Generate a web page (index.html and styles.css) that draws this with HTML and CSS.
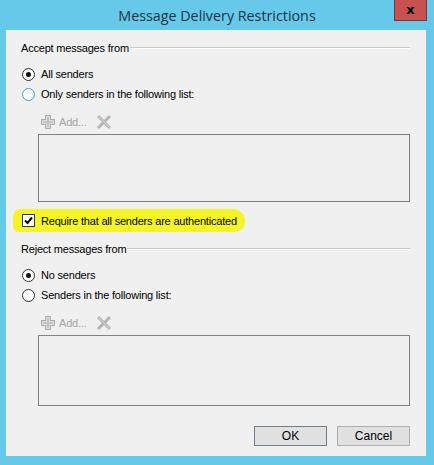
FILE: index.html
```html
<!DOCTYPE html>
<html lang="en">
<head>
    <meta charset="UTF-8">
    <meta name="viewport" content="width=device-width, initial-scale=1.0">
    <title>Message Delivery Restrictions</title>
    <link rel="stylesheet" href="styles.css">
</head>
<body>
    <div class="window">
        <div class="titlebar">
            <span class="title">Message Delivery Restrictions</span>
            <button class="close" type="button">x</button>
        </div>

        <div class="panel">
            <!-- accept group -->
            <div class="legend"><span>Accept messages from</span></div>
            <label class="option first">
                <span class="radio checked"></span>All senders
            </label>
            <label class="option">
                <span class="radio focus"></span>Only senders in the following list:
            </label>
            <div class="toolbar">
                <svg class="plus" width="16" height="16" viewBox="0 0 16 16">
                    <path d="M5.5 1.5h5v4h4v5h-4v4h-5v-4h-4v-5h4z" fill="#c4c4c4" stroke="#a9a9a9"/>
                    <path d="M6.5 2.5h3v4h4v3h-4v4h-3v-4h-4v-3h4z" fill="none" stroke="#dedede"/>
                </svg>
                <span class="add">Add...</span>
                <svg class="remove" width="16" height="16" viewBox="0 0 16 16">
                    <path d="M2 2l12 12M14 2L2 14" stroke="#b4b4b4" stroke-width="3"/>
                    <path d="M2.5 2.5l11 11" stroke="#d4d4d4" stroke-width="1"/>
                </svg>
            </div>
            <div class="listbox"></div>

            <label class="check-row">
                <span class="checkbox">
                    <svg width="9" height="9" viewBox="0 0 9 9">
                        <path d="M1 4.5l2.5 2.5L8 1.5" fill="none" stroke="#000" stroke-width="2"/>
                    </svg>
                </span>Require that all senders are authenticated
            </label>

            <!-- reject group -->
            <div class="legend"><span>Reject messages from</span></div>
            <label class="option first">
                <span class="radio checked"></span>No senders
            </label>
            <label class="option">
                <span class="radio"></span>Senders in the following list:
            </label>
            <div class="toolbar">
                <svg class="plus" width="16" height="16" viewBox="0 0 16 16">
                    <path d="M5.5 1.5h5v4h4v5h-4v4h-5v-4h-4v-5h4z" fill="#c4c4c4" stroke="#a9a9a9"/>
                    <path d="M6.5 2.5h3v4h4v3h-4v4h-3v-4h-4v-3h4z" fill="none" stroke="#dedede"/>
                </svg>
                <span class="add">Add...</span>
                <svg class="remove" width="16" height="16" viewBox="0 0 16 16">
                    <path d="M2 2l12 12M14 2L2 14" stroke="#b4b4b4" stroke-width="3"/>
                    <path d="M2.5 2.5l11 11" stroke="#d4d4d4" stroke-width="1"/>
                </svg>
            </div>
            <div class="listbox tall"></div>

            <div class="buttons">
                <button type="button" class="btn default">OK</button>
                <button type="button" class="btn">Cancel</button>
            </div>
        </div>
    </div>
</body>
</html>
```

FILE: styles.css
```css
html, body {
    margin: 0;
    padding: 0;
    height: 100%;
    background-color: #66c9e9;
    font-family: "Liberation Sans", Arial, sans-serif;
    font-size: 11px;
    letter-spacing: -0.2px;
    color: #000;
}

.window {
    width: 434px;
    height: 465px;
    display: flex;
    flex-direction: column;
}

.titlebar {
    height: 30px;
    position: relative;
    display: flex;
    align-items: center;
    justify-content: center;
}

.title {
    font-family: "Open Sans", sans-serif;
    font-size: 14.3px;
    letter-spacing: 0;
    color: #1b3444;
    margin-top: 1px;
}

.close {
    position: absolute;
    top: 0;
    right: 7px;
    width: 33px;
    height: 21px;
    padding: 0;
    background-color: #c75050;
    border: 1px solid #6b3a3a;
    border-top: none;
    color: #000;
    font-family: "DejaVu Sans", sans-serif;
    font-weight: bold;
    font-size: 13px;
    line-height: 16px;
}

.panel {
    margin: 0 8px 0 6px;
    height: 426px;
    box-sizing: border-box;
    background-color: #f0f0f0;
    padding: 10px 16px 0 15px;
    display: flex;
    flex-direction: column;
}

.legend {
    height: 16px;
    display: flex;
    align-items: center;
}

.legend::after {
    content: "";
    flex: 1;
    height: 1px;
    background-color: #c8c8c8;
    border-bottom: 1px solid #fff;
    margin-left: 1px;
}

.option {
    height: 20px;
    display: flex;
    align-items: center;
    white-space: nowrap;
}

.option.first {
    margin-top: 8px;
}

.radio {
    width: 11px;
    height: 11px;
    border: 1px solid #333;
    border-radius: 50%;
    background-color: #fff;
    margin: 0 6px 0 1px;
    position: relative;
}

.radio.focus {
    border-color: #3c9fd4;
}

.radio.checked::after {
    content: "";
    position: absolute;
    left: 3px;
    top: 3px;
    width: 5px;
    height: 5px;
    border-radius: 50%;
    background-color: #111;
}

.toolbar {
    height: 18px;
    margin: 9px 0 3px 19px;
    display: flex;
    align-items: center;
}

.add {
    color: #a3a3a3;
    margin-left: 3px;
}

.remove {
    margin-left: 9px;
}

.listbox {
    margin-left: 17px;
    height: 66px;
    border: 1px solid #828282;
    background-color: #f0f0f0;
}

.listbox.tall {
    height: 69px;
}

.check-row {
    align-self: flex-start;
    height: 23px;
    margin: 7px 0 9px -8px;
    padding: 0 8px 0 9px;
    white-space: nowrap;
    display: flex;
    align-items: center;
    background-color: #f5f526;
    border-radius: 8px 12px 10px 6px;
}

.checkbox {
    width: 11px;
    height: 11px;
    border: 1px solid #333;
    background-color: #fff;
    margin-right: 6px;
    display: flex;
    align-items: center;
    justify-content: center;
}

.buttons {
    margin-top: 20px;
    display: flex;
    justify-content: flex-end;
    gap: 10px;
}

.btn {
    width: 73px;
    height: 20px;
    padding: 0;
    background-color: #e1e1e1;
    border: 1px solid #adadad;
    font-family: "Liberation Sans", Arial, sans-serif;
    font-size: 12px;
    color: #000;
}

.btn.default {
    border-color: #6e7e8e;
}
```
